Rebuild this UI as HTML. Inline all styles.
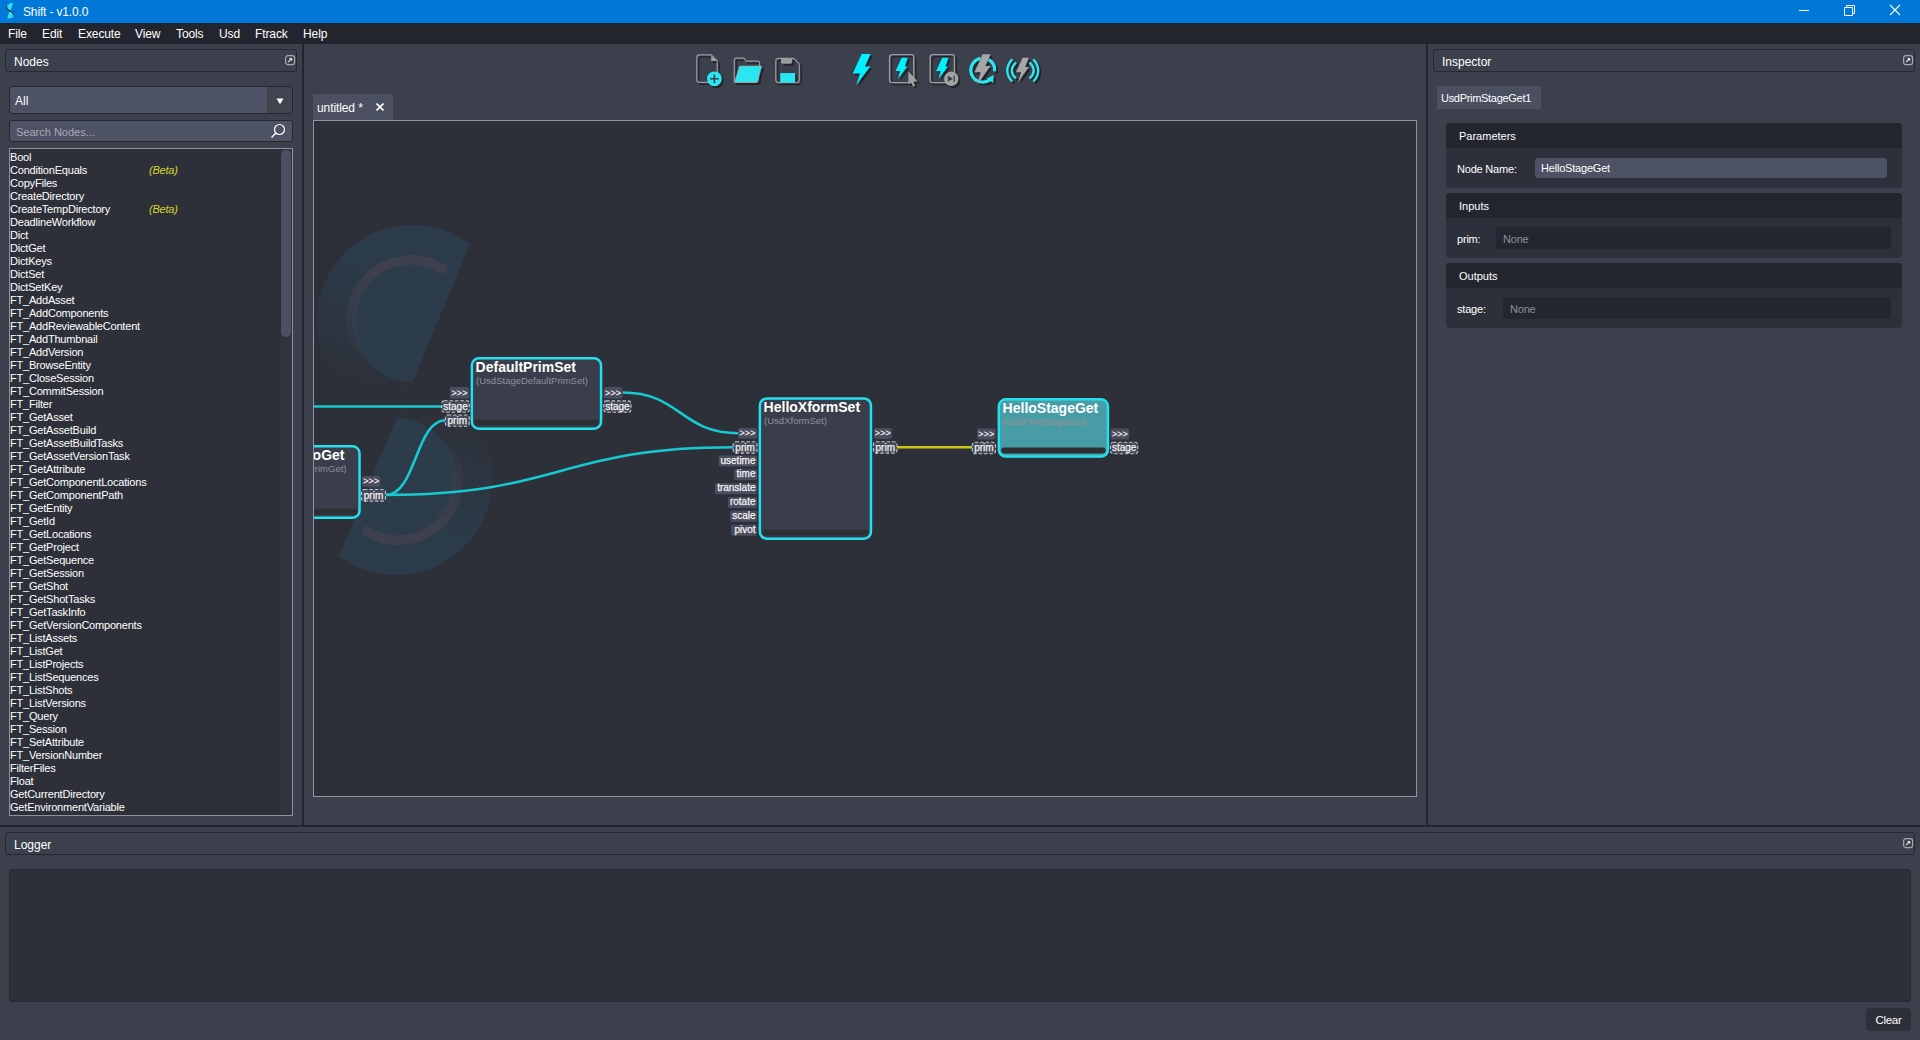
<!DOCTYPE html>
<html><head><meta charset="utf-8">
<style>
*{margin:0;padding:0;box-sizing:border-box}
html,body{width:1920px;height:1040px;overflow:hidden;background:#3c404d;font-family:"Liberation Sans",sans-serif;color:#fff}
.a{position:absolute}
#title{left:0;top:0;width:1920px;height:23px;background:#0078d7}
#title .t{left:23px;top:5px;font-size:12px;color:#fff;white-space:nowrap;letter-spacing:-0.15px}
#menu{left:0;top:23px;width:1920px;height:21px;background:#23252e}
#menu span{position:absolute;top:4px;font-size:12px;color:#fff;letter-spacing:-0.1px}
.vsep{background:#23252e}
.dh{border:1px solid #262830;border-radius:3px;background:#3c404d}
.dh .t{left:8px;top:5px;font-size:12px;color:#fff}
.fl{width:10px;height:10px;border:1.5px solid #b8bac0;border-radius:2px}
#list{left:9px;top:148px;width:284px;height:668px;background:#2d3039;border:1px solid #8e9197}
#list div{position:absolute;left:0px;font-size:11px;letter-spacing:-0.2px;color:#fff;white-space:nowrap;line-height:13px}
#list .b{color:#d6d629;font-style:italic}
#canvas{left:313px;top:120px;width:1104px;height:677px;background:#2d3039;border:1px solid #92959d;overflow:hidden}

#list .tr{position:absolute;left:271px;top:0;width:11px;height:666px;background:#31343e}
#list .sb{position:absolute;left:271px;top:1px;width:10px;height:187px;background:#4b5063;border-radius:5px}
.combo{left:9px;top:86px;width:284px;height:28px;background:#4d5264;border:1px solid #262830;border-radius:3px}
.combo .t{left:5px;top:7px;font-size:12px}
.combo .dd{left:257px;top:0;width:25px;height:26px;background:#40444f;border-radius:0 3px 3px 0}
.search{left:9px;top:120px;width:284px;height:22px;background:#4d5264;border:1px solid #262830;border-radius:3px}
.search .t{left:6px;top:5px;font-size:11px;color:#a9acb6}

.grp{background:#2d303a;border-radius:4px;overflow:hidden}
.grp .h{left:0;top:0;right:0;height:25px;background:#23262f}
.grp .h span{position:absolute;left:13px;top:7px;font-size:11px}
.lbl{font-size:11px;color:#fff;white-space:nowrap;letter-spacing:-0.2px}
.fld{border-radius:3px;font-size:11px;white-space:nowrap;letter-spacing:-0.2px}

.nt{font-family:"Liberation Sans",sans-serif;font-size:14px;font-weight:bold;fill:#fff}
.ns{font-family:"Liberation Sans",sans-serif;font-size:9.5px}
.pl{font-family:"Liberation Sans",sans-serif;font-size:10px;fill:#f4f4f4;stroke:#f4f4f4;stroke-width:0.25px}
.pa{font-family:"Liberation Sans",sans-serif;font-size:9px;fill:#f0f0f0;letter-spacing:0.1px;stroke:#f0f0f0;stroke-width:0.15px}
</style></head><body>
<div id="title" class="a">
  <svg class="a" style="left:2px;top:0" width="20" height="22" viewBox="2 0 20 22"><path d="M6.7 7Q6.9 3.4 13 3.1L10.9 10.3Q7 9.6 6.7 7Z" fill="#2ae0ee"/><path d="M9.2 11.7Q13.5 12.5 13.7 15.6Q13.5 18.6 7.1 18.7Z" fill="#2ae0ee"/><path d="M6.5 5.6Q6.7 9.8 10 11Q13.4 12.3 13.4 15.6" fill="none" stroke="#33395a" stroke-width="1.1"/></svg><div class="a t">Shift - v1.0.0</div><svg class="a" style="left:1790px;top:0" width="130" height="23" viewBox="1790 0 130 23"><path d="M1799 10.5H1809" stroke="#fff" stroke-width="1"/><path d="M1844.5 7.5h8v8h-8z M1846.5 7.5v-2h8v8h-2" fill="none" stroke="#fff" stroke-width="1"/><path d="M1890 5L1900 15M1900 5L1890 15" stroke="#fff" stroke-width="1.1"/></svg>
</div>
<div id="menu" class="a">
  <span style="left:8px">File</span><span style="left:42px">Edit</span><span style="left:78px">Execute</span><span style="left:135px">View</span><span style="left:176px">Tools</span><span style="left:219px">Usd</span><span style="left:255px">Ftrack</span><span style="left:303px">Help</span>
</div>
<!-- separators -->
<div class="a vsep" style="left:302px;top:44px;width:2px;height:781px"></div>
<div class="a vsep" style="left:1426px;top:44px;width:2px;height:781px"></div>
<div class="a vsep" style="left:0;top:825px;width:1920px;height:2px"></div>

<!-- left dock -->
<div class="a dh" style="left:5px;top:49px;width:292px;height:23px"><div class="a t">Nodes</div></div>
<div class="a combo"><div class="a t">All</div><div class="a dd"><svg class="a" style="left:9px;top:11px" width="8" height="7" viewBox="0 0 8 7"><path d="M0.5 0.5H7.5L4 6.2Z" fill="#fff"/></svg></div></div>
<div class="a search"><div class="a t">Search Nodes...</div><svg class="a" style="left:259px;top:0px" width="18" height="18" viewBox="0 0 18 18"><circle cx="10.5" cy="8.5" r="5" fill="none" stroke="#fff" stroke-width="1.2"/><path d="M7 12L2.5 16.5" stroke="#fff" stroke-width="1.4"/></svg></div>
<div id="list" class="a">
<div style="top:2px">Bool</div>
<div style="top:15px">ConditionEquals</div><div class="b" style="top:15px;left:139px">(Beta)</div>
<div style="top:28px">CopyFiles</div>
<div style="top:41px">CreateDirectory</div>
<div style="top:54px">CreateTempDirectory</div><div class="b" style="top:54px;left:139px">(Beta)</div>
<div style="top:67px">DeadlineWorkflow</div>
<div style="top:80px">Dict</div>
<div style="top:93px">DictGet</div>
<div style="top:106px">DictKeys</div>
<div style="top:119px">DictSet</div>
<div style="top:132px">DictSetKey</div>
<div style="top:145px">FT_AddAsset</div>
<div style="top:158px">FT_AddComponents</div>
<div style="top:171px">FT_AddReviewableContent</div>
<div style="top:184px">FT_AddThumbnail</div>
<div style="top:197px">FT_AddVersion</div>
<div style="top:210px">FT_BrowseEntity</div>
<div style="top:223px">FT_CloseSession</div>
<div style="top:236px">FT_CommitSession</div>
<div style="top:249px">FT_Filter</div>
<div style="top:262px">FT_GetAsset</div>
<div style="top:275px">FT_GetAssetBuild</div>
<div style="top:288px">FT_GetAssetBuildTasks</div>
<div style="top:301px">FT_GetAssetVersionTask</div>
<div style="top:314px">FT_GetAttribute</div>
<div style="top:327px">FT_GetComponentLocations</div>
<div style="top:340px">FT_GetComponentPath</div>
<div style="top:353px">FT_GetEntity</div>
<div style="top:366px">FT_GetId</div>
<div style="top:379px">FT_GetLocations</div>
<div style="top:392px">FT_GetProject</div>
<div style="top:405px">FT_GetSequence</div>
<div style="top:418px">FT_GetSession</div>
<div style="top:431px">FT_GetShot</div>
<div style="top:444px">FT_GetShotTasks</div>
<div style="top:457px">FT_GetTaskInfo</div>
<div style="top:470px">FT_GetVersionComponents</div>
<div style="top:483px">FT_ListAssets</div>
<div style="top:496px">FT_ListGet</div>
<div style="top:509px">FT_ListProjects</div>
<div style="top:522px">FT_ListSequences</div>
<div style="top:535px">FT_ListShots</div>
<div style="top:548px">FT_ListVersions</div>
<div style="top:561px">FT_Query</div>
<div style="top:574px">FT_Session</div>
<div style="top:587px">FT_SetAttribute</div>
<div style="top:600px">FT_VersionNumber</div>
<div style="top:613px">FilterFiles</div>
<div style="top:626px">Float</div>
<div style="top:639px">GetCurrentDirectory</div>
<div style="top:652px">GetEnvironmentVariable</div>
<div class="tr"></div><div class="sb"></div></div>

<!-- center -->
<svg class="a" style="left:680px;top:45px;filter:drop-shadow(2px 2px 0.7px rgba(20,22,28,0.65))" width="380" height="50" viewBox="680 45 380 50">
<g fill="none" stroke="#9c9c9c" stroke-width="1.2">
<path d="M711.2 54.9H699.4Q696.8 54.9 696.8 57.5V79.8Q696.8 82.4 699.4 82.4H713.6Q717.2 82.4 717.2 79.6V61Z"/>
</g>
<path d="M711.2 54.9V61H717.2Z" fill="#9c9c9c"/>
<circle cx="714.4" cy="78.8" r="7.4" fill="#2ae6f0"/>
<path d="M710 78.8H718.8M714.4 74.4V83.2" stroke="#3b3f4c" stroke-width="1.6"/>
<path d="M746 61.2L744.8 59.1Q744.2 58.1 743 58.1H736.3Q734.3 58.1 734.3 60.1V80.4Q734.3 82.4 736.3 82.4H755.5Q757.5 82.4 758.2 80.4L759.6 66V63.2Q759.6 61.2 757.6 61.2Z" fill="none" stroke="#9c9c9c" stroke-width="1.2"/>
<path d="M739.6 66.1H761.8L757.2 82.2H734.6Z" fill="#2ae6f0" stroke="#a8a8a8" stroke-width="0.7"/>
<path d="M793.6 58.3H778.6Q775.8 58.3 775.8 61.1V79.8Q775.8 82.6 778.6 82.6H796.6Q799.3 82.6 799.3 79.8V63.9Z" fill="none" stroke="#9c9c9c" stroke-width="1.2"/>
<path d="M781 58.3H792.2V62Q792.2 63.8 790.4 63.8H782.8Q781 63.8 781 62Z" fill="#9c9c9c"/>
<rect x="780.3" y="73.1" width="14.8" height="9.4" fill="#2ae6f0"/>
<path d="M861.6 54H870.6L865 66.6H870.3L856.2 85.3L860 73.4H852.8Z" fill="#00f0ff"/>
<rect x="889.6" y="54.6" width="24.2" height="28" rx="2.6" fill="none" stroke="#9c9c9c" stroke-width="1.4"/>
<path d="M901.6 57.8H907.8L905 66.6H907.5L898 79L900 71H895.6Z" fill="#00f0ff"/>
<path d="M908.4 71.6V84.6L911 82.2L913.2 86.8L915.2 85.8L913.2 81.4H917.8Z" fill="#a0a0a0"/>
<rect x="930.2" y="54.6" width="24.2" height="28" rx="2.6" fill="none" stroke="#9c9c9c" stroke-width="1.4"/>
<path d="M942.2 57.8H948.4L945.6 66.6H948.1L938.6 79L940.6 71H936.2Z" fill="#00f0ff"/>
<circle cx="951.3" cy="78.8" r="7.2" fill="#a3a3a3"/>
<path d="M947.8 75.8L953 78.8L947.8 81.8Z" fill="#3b3f4c"/><path d="M954.2 75.6V82" stroke="#3b3f4c" stroke-width="1.2"/>
<path d="M980.4 58.4A12 12 0 1 0 990 79.8" fill="none" stroke="#2ae6f0" stroke-width="3.2"/>
<path d="M988.6 59.6A12 12 0 0 1 994.6 71.4" fill="none" stroke="#2ae6f0" stroke-width="3.2"/>
<path d="M993.8 75L993.2 83L986.6 78.8Z" fill="#2ae6f0"/>
<path d="M982.5 54.2H990.7L985.5 66H990.5L977.3 84.7L980.6 72.3H974.5Z" fill="#a6a6a6"/>
<path d="M1011.6 60Q1007.3 65 1007.3 70.4Q1007.3 75.8 1011.6 80.8M1015.3 63.1Q1011.8 66.5 1011.8 70.4Q1011.8 74.3 1015.3 77.7M1033.9 60Q1038.2 65 1038.2 70.4Q1038.2 75.8 1033.9 80.8M1030.2 63.1Q1033.7 66.5 1033.7 70.4Q1033.7 74.3 1030.2 77.7" fill="none" stroke="#2ae6f0" stroke-width="2.4" stroke-linecap="round"/>
<path d="M1022.6 57.7H1028.9L1025.2 66.9H1028.9L1018.1 82.3L1021 72.3H1016Z" fill="#a6a6a6"/>
</svg>
<div class="a" style="left:313px;top:94px;width:80px;height:26px;background:#4b5061"><div class="a" style="left:4px;top:7px;font-size:12px;white-space:nowrap;letter-spacing:-0.1px">untitled *</div>
<svg class="a" style="left:63px;top:9px" width="8" height="8" viewBox="0 0 8 8"><path d="M0.5 0.5L7.5 7.5M7.5 0.5L0.5 7.5" stroke="#fff" stroke-width="1.6"/></svg></div>
<div id="canvas" class="a"></div>
<!--CANVAS--><svg class="a" style="left:314px;top:121px" width="1102" height="675" viewBox="314 121 1102 675">
<defs>
<clipPath id="cpA"><path d="M532 95L352 527L100 527L100 95Z"/></clipPath>
<linearGradient id="gA" gradientUnits="userSpaceOnUse" x1="413" y1="272" x2="395" y2="388"><stop offset="0" stop-color="#2c3b49"/><stop offset="1" stop-color="#2c3b49" stop-opacity="0.04"/></linearGradient>
<linearGradient id="gArc" gradientUnits="userSpaceOnUse" x1="413" y1="275" x2="385" y2="372"><stop offset="0" stop-color="#3f404d"/><stop offset="1" stop-color="#3f404d" stop-opacity="0"/></linearGradient>
</defs>
<g><g clip-path="url(#cpA)"><circle cx="413" cy="321" r="96" fill="url(#gA)"/><circle cx="413" cy="321" r="61" fill="#2c3c4a"/></g><path d="M442.4 269A59.5 59.5 0 1 0 379 370" fill="none" stroke="url(#gArc)" stroke-width="9.5" stroke-linecap="round"/></g>
<g transform="rotate(180 404.5 400)"><g clip-path="url(#cpA)"><circle cx="413" cy="321" r="96" fill="url(#gA)"/><circle cx="413" cy="321" r="61" fill="#2c3c4a"/></g><path d="M442.4 269A59.5 59.5 0 1 0 379 370" fill="none" stroke="url(#gArc)" stroke-width="9.5" stroke-linecap="round"/></g>
<path d="M314 406.5H442" stroke="#17c9d1" stroke-width="2.6"/>
<path d="M386 495C415.75 495 415.75 420.3 445.5 420.3" fill="none" stroke="#17c9d1" stroke-width="2.6"/>
<path d="M386 495C559.75 495 559.75 447.3 733.5 447.3" fill="none" stroke="#17c9d1" stroke-width="2.6"/>
<path d="M622.5 392.5C680.5 392.5 680.5 433.2 738.5 433.2" fill="none" stroke="#17c9d1" stroke-width="2.6"/>
<path d="M897 447.3H972.5" stroke="#c9c918" stroke-width="2.6"/>
<rect x="231.25" y="446.25" width="128.3" height="71.5" rx="7" fill="#3a3e4c" stroke="#24e0ec" stroke-width="2.5"/><rect x="233.5" y="508.8" width="123.80000000000001" height="5.8" rx="2.9" fill="#2e2f32"/><text x="344.5" y="460.2" class="nt" text-anchor="end">HelloGet</text><text x="346.5" y="471.7" class="ns" text-anchor="end" fill="#8e8f99">(UsdStagePrimGet)</text>
<rect x="362" y="476" width="18.5" height="10.699999999999989" rx="2" fill="#4b4d5f"/><text x="371.25" y="483.7" text-anchor="middle" class="pa">&gt;&gt;&gt;</text>
<rect x="361.5" y="489.5" width="24" height="11.600000000000023" rx="2.5" fill="#474a5a" stroke="#c4c4cc" stroke-width="1.1" stroke-dasharray="3.4 2"/><text x="373.5" y="498.6" text-anchor="middle" class="pl">prim</text>
<rect x="471.85" y="358.25" width="129.19999999999993" height="70.5" rx="7" fill="#3a3e4c" stroke="#24e0ec" stroke-width="2.5"/><rect x="474.1" y="419.8" width="124.69999999999993" height="5.8" rx="2.9" fill="#2e2f32"/><text x="475.6" y="372.2" class="nt">DefaultPrimSet</text><text x="476.1" y="383.7" class="ns" fill="#8e8f99">(UsdStageDefaultPrimSet)</text>
<rect x="450" y="387" width="19" height="11.699999999999989" rx="2" fill="#4b4d5f"/><text x="459.5" y="395.7" text-anchor="middle" class="pa">&gt;&gt;&gt;</text>
<rect x="441.7" y="400.7" width="27.600000000000023" height="11.600000000000023" rx="2.5" fill="#474a5a" stroke="#c4c4cc" stroke-width="1.1" stroke-dasharray="3.4 2"/><text x="455.5" y="409.8" text-anchor="middle" class="pl">stage</text>
<rect x="445.3" y="415.0" width="24.0" height="11.300000000000011" rx="2.5" fill="#474a5a" stroke="#c4c4cc" stroke-width="1.1" stroke-dasharray="3.4 2"/><text x="457.3" y="423.8" text-anchor="middle" class="pl">prim</text>
<rect x="603.8" y="387" width="18.700000000000045" height="11.699999999999989" rx="2" fill="#4b4d5f"/><text x="613.15" y="395.7" text-anchor="middle" class="pa">&gt;&gt;&gt;</text>
<rect x="603.8" y="400.9" width="27.200000000000045" height="11.400000000000034" rx="2.5" fill="#474a5a" stroke="#c4c4cc" stroke-width="1.1" stroke-dasharray="3.4 2"/><text x="617.4" y="409.8" text-anchor="middle" class="pl">stage</text>
<rect x="759.85" y="398.45" width="111.10000000000002" height="140.2" rx="7" fill="#3a3e4c" stroke="#24e0ec" stroke-width="2.5"/><rect x="762.1" y="529.6999999999999" width="106.60000000000002" height="5.8" rx="2.9" fill="#2e2f32"/><text x="763.6" y="412.4" class="nt">HelloXformSet</text><text x="764.1" y="423.9" class="ns" fill="#8e8f99">(UsdXformSet)</text>
<rect x="738" y="428" width="19" height="10.800000000000011" rx="2" fill="#4b4d5f"/><text x="747.5" y="435.8" text-anchor="middle" class="pa">&gt;&gt;&gt;</text>
<rect x="733.2" y="441.8" width="23.799999999999955" height="11.300000000000011" rx="2.5" fill="#474a5a" stroke="#c4c4cc" stroke-width="1.1" stroke-dasharray="3.4 2"/><text x="745.1" y="450.6" text-anchor="middle" class="pl">prim</text>
<rect x="718.5" y="455.5" width="38.5" height="11.0" rx="2" fill="#4b4d5f"/><text x="755.5" y="463.5" text-anchor="end" class="pl">usetime</text>
<rect x="734" y="469.2" width="23" height="11.0" rx="2" fill="#4b4d5f"/><text x="755.5" y="477.2" text-anchor="end" class="pl">time</text>
<rect x="715" y="483.3" width="42" height="11.0" rx="2" fill="#4b4d5f"/><text x="755.5" y="491.3" text-anchor="end" class="pl">translate</text>
<rect x="727.8" y="497" width="29.200000000000045" height="11" rx="2" fill="#4b4d5f"/><text x="755.5" y="505" text-anchor="end" class="pl">rotate</text>
<rect x="730" y="510.8" width="27" height="10.999999999999943" rx="2" fill="#4b4d5f"/><text x="755.5" y="518.8" text-anchor="end" class="pl">scale</text>
<rect x="731" y="524.7" width="26" height="11.0" rx="2" fill="#4b4d5f"/><text x="755.5" y="532.7" text-anchor="end" class="pl">pivot</text>
<rect x="873.8" y="428" width="18.200000000000045" height="10.899999999999977" rx="2" fill="#4b4d5f"/><text x="882.9" y="435.9" text-anchor="middle" class="pa">&gt;&gt;&gt;</text>
<rect x="873.5" y="441.8" width="23.5" height="11.300000000000011" rx="2.5" fill="#474a5a" stroke="#c4c4cc" stroke-width="1.1" stroke-dasharray="3.4 2"/><text x="885.25" y="450.6" text-anchor="middle" class="pl">prim</text>
<rect x="998.85" y="399.25" width="109.10000000000002" height="57.30000000000001" rx="7" fill="#489ca6" stroke="#24e0ec" stroke-width="2.5"/><rect x="1001.1" y="447.6" width="104.60000000000002" height="5.8" rx="2.9" fill="#2e2f32"/><text x="1002.6" y="413.2" class="nt">HelloStageGet</text><text x="1003.1" y="424.7" class="ns" fill="#9b8f93">(UsdPrimStageGet)</text>
<rect x="977" y="428.6" width="18.700000000000045" height="11.0" rx="2" fill="#4b4d5f"/><text x="986.35" y="436.6" text-anchor="middle" class="pa">&gt;&gt;&gt;</text>
<rect x="972.3" y="442.3" width="23.200000000000045" height="11.399999999999977" rx="2.5" fill="#474a5a" stroke="#c4c4cc" stroke-width="1.1" stroke-dasharray="3.4 2"/><text x="983.9" y="451.2" text-anchor="middle" class="pl">prim</text>
<rect x="1110.6" y="428.6" width="18.700000000000045" height="11.0" rx="2" fill="#4b4d5f"/><text x="1119.9499999999998" y="436.6" text-anchor="middle" class="pa">&gt;&gt;&gt;</text>
<rect x="1110.5" y="442.3" width="27.299999999999955" height="11.399999999999977" rx="2.5" fill="#474a5a" stroke="#c4c4cc" stroke-width="1.1" stroke-dasharray="3.4 2"/><text x="1124.15" y="451.2" text-anchor="middle" class="pl">stage</text>
</svg><!--/CANVAS-->

<!-- right dock -->
<div class="a dh" style="left:1433px;top:49px;width:482px;height:23px"><div class="a t">Inspector</div></div>
<div class="a" style="left:1437px;top:86px;width:104px;height:23px;background:#4b5061"><div class="a lbl" style="left:4px;top:6px;letter-spacing:-0.3px">UsdPrimStageGet1</div></div>
<div class="a grp" style="left:1446px;top:123px;width:456px;height:65px"><div class="a h"><span>Parameters</span></div>
 <div class="a lbl" style="left:11px;top:40px">Node Name:</div>
 <div class="a fld" style="left:89px;top:35px;width:352px;height:20px;background:#4d5264"><span class="a" style="left:6px;top:4px">HelloStageGet</span></div>
</div>
<div class="a grp" style="left:1446px;top:193px;width:456px;height:65px"><div class="a h"><span>Inputs</span></div>
 <div class="a lbl" style="left:11px;top:40px">prim:</div>
 <div class="a fld" style="left:50px;top:34px;width:395px;height:22px;background:#23262e"><span class="a" style="left:7px;top:6px;color:#8d9099">None</span></div>
</div>
<div class="a grp" style="left:1446px;top:263px;width:456px;height:65px"><div class="a h"><span>Outputs</span></div>
 <div class="a lbl" style="left:11px;top:40px">stage:</div>
 <div class="a fld" style="left:57px;top:34px;width:388px;height:22px;background:#23262e"><span class="a" style="left:7px;top:6px;color:#8d9099">None</span></div>
</div>

<!-- logger -->
<div class="a dh" style="left:5px;top:832px;width:1910px;height:23px"><div class="a t">Logger</div></div>
<div class="a" style="left:9px;top:869px;width:1902px;height:133px;background:#2d3039;border:1px solid #282a33;border-radius:3px"></div>
<div class="a" style="left:1866px;top:1008px;width:45px;height:23px;background:#2d3039;border-radius:4px;font-size:11.5px;letter-spacing:-0.3px;text-align:center;line-height:24px">Clear</div>
<svg class="a" style="left:284px;top:54px" width="12" height="12" viewBox="0 0 12 12"><rect x="1.6" y="1.6" width="9" height="9" rx="2.4" fill="none" stroke="#a4a7af" stroke-width="1.2"/><path d="M4.3 7.8L6.6 5.5" stroke="#dcdde0" stroke-width="1.1" stroke-linecap="round"/><path d="M5 4H8.2V7.2Z" fill="#e6e6e8"/></svg><svg class="a" style="left:1902px;top:54px" width="12" height="12" viewBox="0 0 12 12"><rect x="1.6" y="1.6" width="9" height="9" rx="2.4" fill="none" stroke="#a4a7af" stroke-width="1.2"/><path d="M4.3 7.8L6.6 5.5" stroke="#dcdde0" stroke-width="1.1" stroke-linecap="round"/><path d="M5 4H8.2V7.2Z" fill="#e6e6e8"/></svg><svg class="a" style="left:1902px;top:837px" width="12" height="12" viewBox="0 0 12 12"><rect x="1.6" y="1.6" width="9" height="9" rx="2.4" fill="none" stroke="#a4a7af" stroke-width="1.2"/><path d="M4.3 7.8L6.6 5.5" stroke="#dcdde0" stroke-width="1.1" stroke-linecap="round"/><path d="M5 4H8.2V7.2Z" fill="#e6e6e8"/></svg>
</body></html>
